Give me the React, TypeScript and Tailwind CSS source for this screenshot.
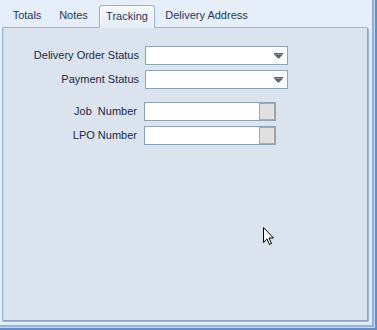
import React from "react";

const tabs = [
  { label: "Totals", w: "w-[46px]" },
  { label: "Notes", w: "w-[47px]" },
];

function ComboArrow() {
  return (
    <svg width="9" height="6" viewBox="0 0 9 6" className="block">
      <rect x="0" y="0" width="9" height="1.5" fill="#5b6878" />
      <path d="M0 1.5 L9 1.5 L4.5 6 Z" fill="#5b6878" />
    </svg>
  );
}

function Combo() {
  return (
    <div className="flex h-[19px] w-[143px] items-center justify-end border border-[#8ba2b9] bg-white pr-[4px]">
      <ComboArrow />
    </div>
  );
}

function ButtonEdit() {
  return (
    <div className="flex h-[19px] w-[132px] border border-[#8ba2b9] bg-white">
      <div className="flex-1" />
      <div className="w-[16px] border border-[#a9a9a9] bg-[#e0e0e0]" />
    </div>
  );
}

function Cursor() {
  return (
    <svg width="13" height="20" viewBox="0 0 13 20" className="absolute left-[263px] top-[227px]">
      <path
        d="M0.5 0.5 L0.5 15.5 L4 12 L6.5 17.5 L8.5 16.5 L6 11 L10.5 11 Z"
        fill="#ffffff"
        stroke="#000000"
        strokeWidth="1"
        strokeLinejoin="miter"
      />
    </svg>
  );
}

export default function App() {
  return (
    <div
      className="relative h-[330px] w-[377px] overflow-hidden border-b-[2px] border-r-[2px] border-[#6a8cb8] text-[11px] text-[#1e395b]"
      style={{ fontFamily: '"Liberation Sans", Arial, sans-serif' }}
    >
      <div className="h-full border-b border-r border-[#c4d8f2]">
        <div className="h-full border-b-[2px] border-r-[2px] border-[#8fb3e3]">
          <div className="flex h-full flex-col border-b-[2px] border-r border-[#dce9f9] bg-[#e6eef9] pb-[1px] pr-[2px]">
            {/* tab strip */}
            <div className="flex h-[27px] items-end pl-[4px]">
              {tabs.map((t) => (
                <div key={t.label} className={`${t.w} flex h-[22px] items-center justify-center pb-[1px]`}>
                  {t.label}
                </div>
              ))}
              <div className="relative z-10 ml-[2px] -mb-[1px] flex h-[23px] w-[56px] items-center justify-center rounded-t-[3px] border border-b-0 border-[#8db2e3] bg-gradient-to-b from-[#f5f9fe] to-[#e3ecf8] pb-[1px] shadow-[inset_1px_1px_0_#ffffff,inset_-1px_0_0_#ffffff]">
                Tracking
              </div>
              <div className="ml-[2px] flex h-[22px] w-[99px] items-center justify-center pb-[1px]">
                Delivery Address
              </div>
            </div>

            {/* panel */}
            <div className="ml-[2px] flex-1 rounded-tr-[3px] border border-[#94b6e3] bg-[#dbe4ee]">
              <div className="h-full border-b border-l border-r border-[#8ea3ba] border-l-[#c3d6ef] border-r-[#8ea3ba]">
                <div className="flex flex-col pt-[18px] text-[#1a2a44]">
                  <div className="flex items-center">
                    <div className="w-[135px] text-right">Delivery Order Status</div>
                    <div className="ml-[6px]">
                      <Combo />
                    </div>
                  </div>
                  <div className="mt-[5px] flex items-center">
                    <div className="w-[135px] text-right">Payment Status</div>
                    <div className="ml-[6px]">
                      <Combo />
                    </div>
                  </div>
                  <div className="mt-[13px] flex items-center">
                    <div className="w-[133px] whitespace-pre text-right">Job  Number</div>
                    <div className="ml-[7px]">
                      <ButtonEdit />
                    </div>
                  </div>
                  <div className="mt-[5px] flex items-center">
                    <div className="w-[133px] text-right">LPO Number</div>
                    <div className="ml-[7px]">
                      <ButtonEdit />
                    </div>
                  </div>
                </div>
              </div>
            </div>
          </div>
        </div>
      </div>
      <Cursor />
    </div>
  );
}
